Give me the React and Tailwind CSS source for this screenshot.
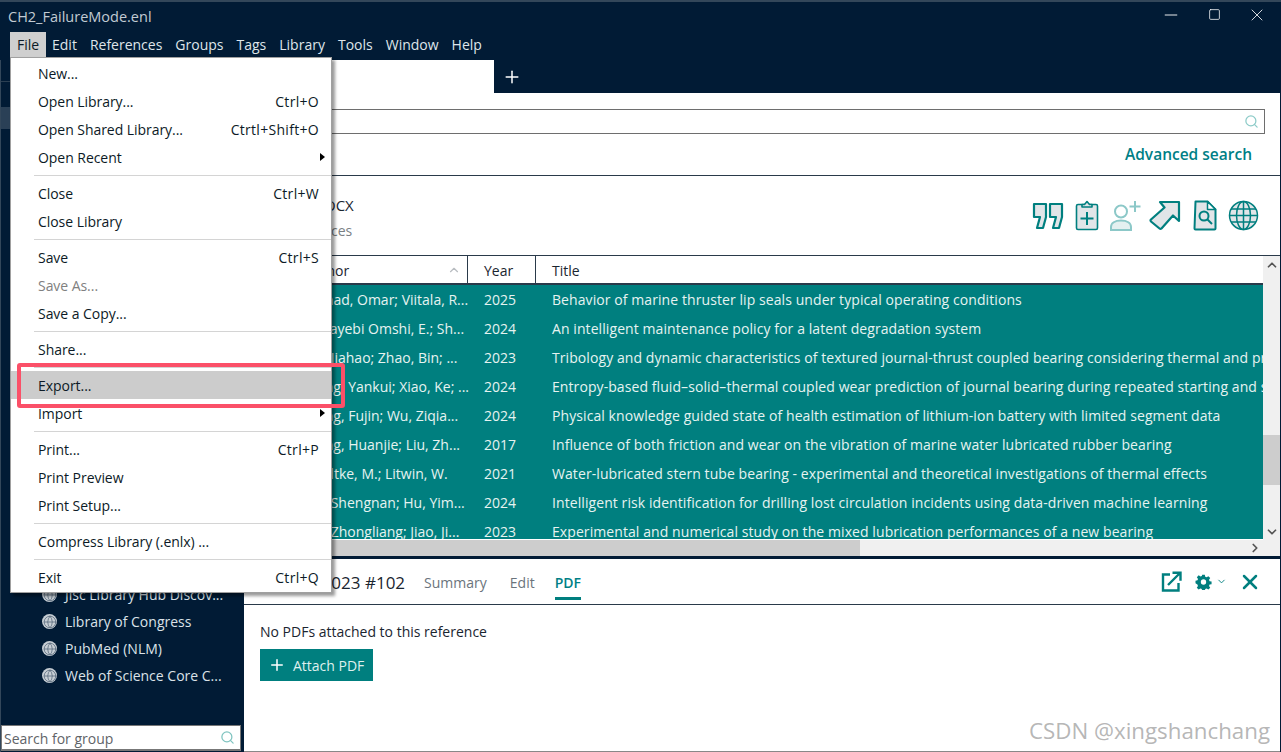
import React from 'react';
import { Globe, Plus, Search, ChevronUp, ChevronDown, ChevronRight, X, Minus, Square } from 'lucide-react';

const rows = [
  { author: 'Ahmad, Omar; Viitala, R...', pad: 'pl-[59px]', year: '2025', title: 'Behavior of marine thruster lip seals under typical operating conditions' },
  { author: 'Tayebi Omshi, E.; Sh...', pad: 'pl-[78px]', year: '2024', title: 'An intelligent maintenance policy for a latent degradation system' },
  { author: 'Liu, Jiahao; Zhao, Bin; ...', pad: 'pl-[60px]', year: '2023', title: 'Tribology and dynamic characteristics of textured journal-thrust coupled bearing considering thermal and pressure effects' },
  { author: 'Wang, Yankui; Xiao, Ke; ...', pad: 'pl-[60px]', year: '2024', title: 'Entropy-based fluid–solid–thermal coupled wear prediction of journal bearing during repeated starting and stopping' },
  { author: 'Wang, Fujin; Wu, Ziqia...', pad: 'pl-[60px]', year: '2024', title: 'Physical knowledge guided state of health estimation of lithium-ion battery with limited segment data' },
  { author: 'Wang, Huanjie; Liu, Zh...', pad: 'pl-[60px]', year: '2017', title: 'Influence of both friction and wear on the vibration of marine water lubricated rubber bearing' },
  { author: 'Wodtke, M.; Litwin, W.', pad: 'pl-[60px]', year: '2021', title: 'Water-lubricated stern tube bearing - experimental and theoretical investigations of thermal effects' },
  { author: 'Liu, Shengnan; Hu, Yim...', pad: 'pl-[60px]', year: '2024', title: 'Intelligent risk identification for drilling lost circulation incidents using data-driven machine learning' },
  { author: 'Liu, Zhongliang; Jiao, Ji...', pad: 'pl-[60px]', year: '2023', title: 'Experimental and numerical study on the mixed lubrication performances of a new bearing' },
];

const menuItems = [
  { label: 'New...' },
  { label: 'Open Library...', keys: 'Ctrl+O' },
  { label: 'Open Shared Library...', keys: 'Ctrtl+Shift+O' },
  { label: 'Open Recent', arrow: true },
  { sep: true },
  { label: 'Close', keys: 'Ctrl+W' },
  { label: 'Close Library' },
  { sep: true },
  { label: 'Save', keys: 'Ctrl+S' },
  { label: 'Save As...', disabled: true },
  { label: 'Save a Copy...' },
  { sep: true },
  { label: 'Share...' },
  { sep: true },
  { label: 'Export...', active: true },
  { label: 'Import', arrow: true },
  { sep: true },
  { label: 'Print...', keys: 'Ctrl+P' },
  { label: 'Print Preview' },
  { label: 'Print Setup...' },
  { sep: true },
  { label: 'Compress Library (.enlx) ...' },
  { sep: true },
  { label: 'Exit', keys: 'Ctrl+Q' },
];

const menuBar = ['Edit', 'References', 'Groups', 'Tags', 'Library', 'Tools', 'Window', 'Help'];
const onlineGroups = ['Jisc Library Hub Discov...', 'Library of Congress', 'PubMed (NLM)', 'Web of Science Core C...'];

const QuoteIcon = () => (
  <svg width="32" height="30" viewBox="0 0 32 30" fill="#e1e5e8" stroke="#007f7f" strokeWidth="2.2" strokeLinejoin="round">
    <path d="M2 3h12v13l-3 11H5l3-11H2z" />
    <path d="M18 3h12v13l-3 11h-6l3-11h-6z" />
  </svg>
);

const ClipboardIcon = () => (
  <svg width="24" height="31" viewBox="0 0 24 31" fill="#e1e5e8" stroke="#007f7f" strokeWidth="1.6" strokeLinejoin="round">
    <rect x="1.5" y="4.5" width="21" height="25" rx="1.5" />
    <path d="M7 7V4.5h2.5L12 1.5l2.500 3H17V7z" />
    <path d="M12 12v13M5.500 18.500h13" strokeWidth="2" fill="none" />
  </svg>
);

const AddPersonIcon = () => (
  <svg width="32" height="31" viewBox="0 0 32 31" fill="#e4f0f0" stroke="#8cc8c8" strokeWidth="2">
    <circle cx="11" cy="11.500" r="6" fill="none" />
    <path d="M1 30v-3c0-4 4-6.500 10-6.500s10 2.500 10 6.500v3z" />
    <path d="M25 1v11M19.500 6.500h11" fill="none" />
  </svg>
);

const ArrowIcon = () => (
  <svg width="32" height="31" viewBox="0 0 32 31" fill="#e1e5e8" stroke="#007f7f" strokeWidth="2.2" strokeLinejoin="round">
    <path d="M11 2h19v19l-6-5.500-11.500 13a1.500 1.500 0 0 1-2 0L2 21.500a1.500 1.500 0 0 1 0-2L15.500 7.500z" />
  </svg>
);

const DocSearchIcon = () => (
  <svg width="24" height="31" viewBox="0 0 24 31" fill="#e1e5e8" stroke="#007f7f" strokeWidth="2" strokeLinejoin="round">
    <path d="M2.500 1.500h12l8 8v19a1 1 0 0 1-1 1h-19a1 1 0 0 1-1-1z" />
    <path d="M14.500 1.500v8h8z" fill="#ffffff" strokeWidth="1.500" />
    <circle cx="11" cy="16" r="4.500" fill="none" />
    <path d="M14.500 19.500l4.500 4.500" fill="none" />
  </svg>
);

const GlobeIcon = () => (
  <svg width="31" height="31" viewBox="0 0 31 31" fill="none" stroke="#007f7f" strokeWidth="1.500">
    <circle cx="15.500" cy="15.500" r="14" fill="#e1e5e8" />
    <ellipse cx="15.500" cy="15.500" rx="7" ry="14" />
    <path d="M15.500 1.500v28M3 9h25M1.500 15.500h28M3 22h25" />
  </svg>
);

const ExternalIcon = () => (
  <svg width="21" height="21" viewBox="0 0 21 21" fill="none" stroke="#007f7f" strokeWidth="2.400">
    <path d="M9 3.500H2v16h15.500V12" />
    <path d="M7 14L18.500 2.500M11.500 1.800h8v8" />
  </svg>
);

const GearIcon = () => (
  <svg width="17" height="16" viewBox="0 0 24 24" fill="#007f7f">
    <path fillRule="evenodd" d="M10 1h4l.6 3.200 2 .8 2.700-1.800 2.800 2.800-1.800 2.700.8 2 3 .6v4l-3 .6-.8 2 1.800 2.700-2.800 2.800-2.700-1.800-2 .8-.6 3.100h-4l-.6-3.100-2-.8-2.700 1.800-2.800-2.800 1.800-2.700-.8-2L0 14v-4l3-.6.800-2L2 4.700 4.800 1.900l2.700 1.800 2-.8zM12 8a4 4 0 1 0 0 8 4 4 0 0 0 0-8z" />
  </svg>
);

const MenuRow = ({ item }) => {
  if (item.sep) {
    return <div className="h-2 flex items-center pl-[23px]"><div className="h-px w-full bg-[#d4d4d4]" /></div>;
  }
  return (
    <div className={`relative h-7 flex items-center justify-between pl-[27px] pr-[12px] ${item.active ? 'bg-[#cccccc]' : ''} ${item.disabled ? 'text-[#808080]' : 'text-[#0c1a26]'}`}>
      <span className="tracking-[-0.05px]">{item.label}</span>
      {item.keys && <span className="tracking-[0.3px]">{item.keys}</span>}
      {item.arrow && <span className="w-0 h-0 border-y-[4px] border-y-transparent border-l-[5px] border-l-black -mr-[6px]" />}
    </div>
  );
};

export default function App() {
  return (
    <div className="relative w-[1281px] h-[752px] overflow-hidden flex flex-col bg-[#011b35] text-[14px] [font-family:'Open_Sans',sans-serif]">
      {/* title bar */}
      <div className="h-[2px] bg-[#33475a]" />
      <div className="h-[30px] flex items-center justify-between pl-2 text-[14.5px] text-[#c2cbd3]">
        <span>CH2_FailureMode.enl</span>
        <div className="flex items-center gap-[26.500px] pr-[14px] -mt-[5px] text-white">
          <Minus size={20} strokeWidth={1.1} />
          <Square size={13} strokeWidth={1.4} />
          <X size={20} strokeWidth={1} />
        </div>
      </div>
      <div className="h-[28px] flex items-start pl-[10px] text-[#dfe5ea]">
        <div className="h-[25px] w-[36px] flex items-center justify-center bg-[#cfcfcf] text-[#0c1a26]">File</div>
        <div className="flex h-[25px] items-center gap-[13px] ml-[6px]">
          {menuBar.map((m) => <span key={m}>{m}</span>)}
        </div>
      </div>

      <div className="flex-1 flex min-h-0">
        {/* left sidebar */}
        <div className="w-[244px] flex flex-col justify-between border-l border-[#33475a] pr-[3px]">
          <div className="flex flex-col">
            <div className="h-[22px] border-b border-[#2b3f52]" />
            <div className="h-[25px]" />
            <div className="h-[22px] bg-[#2a4056]" />
          </div>
          <div className="flex flex-col">
            <div className="flex flex-col pb-[36px] text-[#dbe2e8]">
              {onlineGroups.map((g) => (
                <div key={g} className="h-[27px] flex items-center pl-[41px] gap-[8px]">
                  <span className="w-[15px] h-[15px] rounded-full bg-[#c7ced4] flex items-center justify-center">
                    <Globe size={14} strokeWidth={1.3} className="text-[#55677a]" />
                  </span>
                  <span className="whitespace-nowrap">{g}</span>
                </div>
              ))}
            </div>
            <div className="h-[26px] mb-[1px] flex items-center justify-between bg-white border border-b-2 border-[#777777] text-[#5f6468]">
              <span className="pl-[2px] pt-[1px]">Search for group</span>
              <Search size={15} className="text-[#7fc4c0] mr-[5px]" />
            </div>
          </div>
        </div>

        {/* right panel */}
        <div className="flex-1 flex flex-col min-w-0 border-r border-[#011b35]">
          <div className="h-[33px] flex items-center bg-[#011b35]">
            <div className="w-[250px] h-full bg-white" />
            <Plus size={20} strokeWidth={1.8} className="text-white ml-[8px] mt-[1px]" />
          </div>

          <div className="bg-white h-[83px] border-b border-[#2a3a4a] flex flex-col items-end">
            <div className="mt-[16px] mr-[15px] w-[1004px] h-[25px] border border-[#6e6e6e] flex items-center justify-end pr-[5px]">
              <Search size={15} className="text-[#8ccbc8]" />
            </div>
            <span className="mt-[10px] mr-[28px] text-[15.500px] leading-[20px] font-semibold text-[#007f86]">Advanced search</span>
          </div>

          <div className="bg-white h-[79px] flex items-center justify-between pl-[16px] pr-[21px]">
            <div className="flex flex-col gap-[4px] pt-[4px]">
              <span className="text-[15px] text-[#1a2530] font-medium">CH2_M.DOCX</span>
              <span className="text-[#7a7f84] ml-[3px]">99 references</span>
            </div>
            <div className="flex items-center">
              <QuoteIcon />
              <span className="ml-[11px]"><ClipboardIcon /></span>
              <span className="ml-[11px]"><AddPersonIcon /></span>
              <span className="ml-[7px]"><ArrowIcon /></span>
              <span className="ml-[12px]"><DocSearchIcon /></span>
              <span className="ml-[11px]"><GlobeIcon /></span>
            </div>
          </div>

          {/* reference table */}
          <div className="h-[301px] bg-white border-t border-[#2a3a4a] flex flex-col">
            <div className="flex-1 flex min-h-0">
              <div className="w-[1019px] flex flex-col min-h-0 overflow-hidden pb-[1px]">
                <div className="h-[29px] shrink-0 flex border-b-2 border-[#2a3a4a] text-[#1a2530] bg-white pt-[1px]">
                  <div className="w-[224px] flex items-center justify-between pl-[60px] pr-[6px] border-r border-[#2a3a4a] -mt-[1px]">
                    <span className="pt-[1px]">Author</span>
                    <ChevronUp size={14} className="text-[#b8bcc0]" />
                  </div>
                  <div className="w-[68px] flex items-center pl-[16px] border-r border-[#2a3a4a] -mt-[1px]"><span className="pt-[1px]">Year</span></div>
                  <div className="flex-1 flex items-center pl-[16px]">Title</div>
                </div>
                <div className="flex-1 min-h-0 overflow-hidden bg-[#007f7f] text-[#e6f3f1]">
                  {rows.map((r) => (
                    <div key={r.title} className="h-[29px] flex items-center whitespace-nowrap">
                      <div className={`w-[224px] shrink-0 ${r.pad}`}>{r.author}</div>
                      <div className="w-[68px] shrink-0 pl-[16px]">{r.year}</div>
                      <div className="pl-[16px] tracking-[0.08px]">{r.title}</div>
                    </div>
                  ))}
                </div>
              </div>
              <div className="flex-1 bg-[#f0f0f0] flex flex-col items-center justify-between">
                <ChevronUp size={14} strokeWidth={3} className="text-[#555555] mt-[2px]" />
                <div className="flex-1 w-full relative">
                  <div className="absolute left-0 right-0 top-[163px] h-[50px] bg-[#cdcdcd]" />
                </div>
                <ChevronDown size={14} strokeWidth={3} className="text-[#555555] mb-[1px]" />
              </div>
            </div>
            <div className="h-[16px] bg-[#f0f0f0] flex items-center">
              <div className="ml-[88px] w-[528px] h-full bg-[#cdcdcd]" />
              <ChevronRight size={14} strokeWidth={3} className="text-[#555555] ml-auto mr-[18px]" />
            </div>
          </div>

          <div className="h-[3px] bg-[#011b35]" />

          {/* bottom pane */}
          <div className="flex-1 bg-white flex flex-col border-b border-[#888888]">
            <div className="h-[46px] shrink-0 border-b border-[#2a3a4a] flex items-start pl-[14px] pr-[21px]">
              <span className="text-[17px] h-[41px] pt-[7px] flex items-center text-[#1a2530] whitespace-nowrap">Author, 2023 #102</span>
              <div className="flex items-center h-[41px] pt-[6px] gap-[23px] ml-[19px] text-[#6b747c]">
                <span>Summary</span>
                <span>Edit</span>
                <span className="self-stretch flex items-center border-b-[3px] border-[#007f7f] -ml-[3px] font-semibold text-[#007f86] pt-[3px]">PDF</span>
              </div>
              <div className="ml-auto h-[45px] flex items-center">
                <ExternalIcon />
                <span className="ml-[13px]"><GearIcon /></span>
                <ChevronDown size={11} className="text-[#007f7f] ml-[4px]" />
                <X size={24} strokeWidth={2.500} className="text-[#007f7f] ml-[11px] -mr-[3px]" />
              </div>
            </div>
            <div className="flex-1 flex flex-col items-start pl-[16px] pt-[16px] text-[#1a2530]">
              <span>No PDFs attached to this reference</span>
              <button className="mt-[7px] h-[32px] w-[113px] bg-[#007f7f] text-[#dff0ee] flex items-center pl-[8px] gap-[7px]">
                <Plus size={18} strokeWidth={2} className="text-white" />
                <span>Attach PDF</span>
              </button>
            </div>
          </div>
        </div>
      </div>

      {/* file menu */}
      <div className="absolute left-[10px] top-[57px] w-[322px] h-[536px] py-[1px] bg-white border border-[#a0a0a0] shadow-[3px_3px_3px_rgba(0,0,0,0.4)]">
        {menuItems.map((item, i) => <MenuRow key={i} item={item} />)}
      </div>

      {/* red annotation box */}
      <div className="absolute left-[17px] top-[363px] w-[328px] h-[45px] border-4 border-[#fb5068] rounded-[3px]" />

      {/* watermark */}
      <div className="absolute right-[11px] top-[714px] text-[22.300px] text-[#a3a3a3]/80">CSDN @xingshanchang</div>
    </div>
  );
}
